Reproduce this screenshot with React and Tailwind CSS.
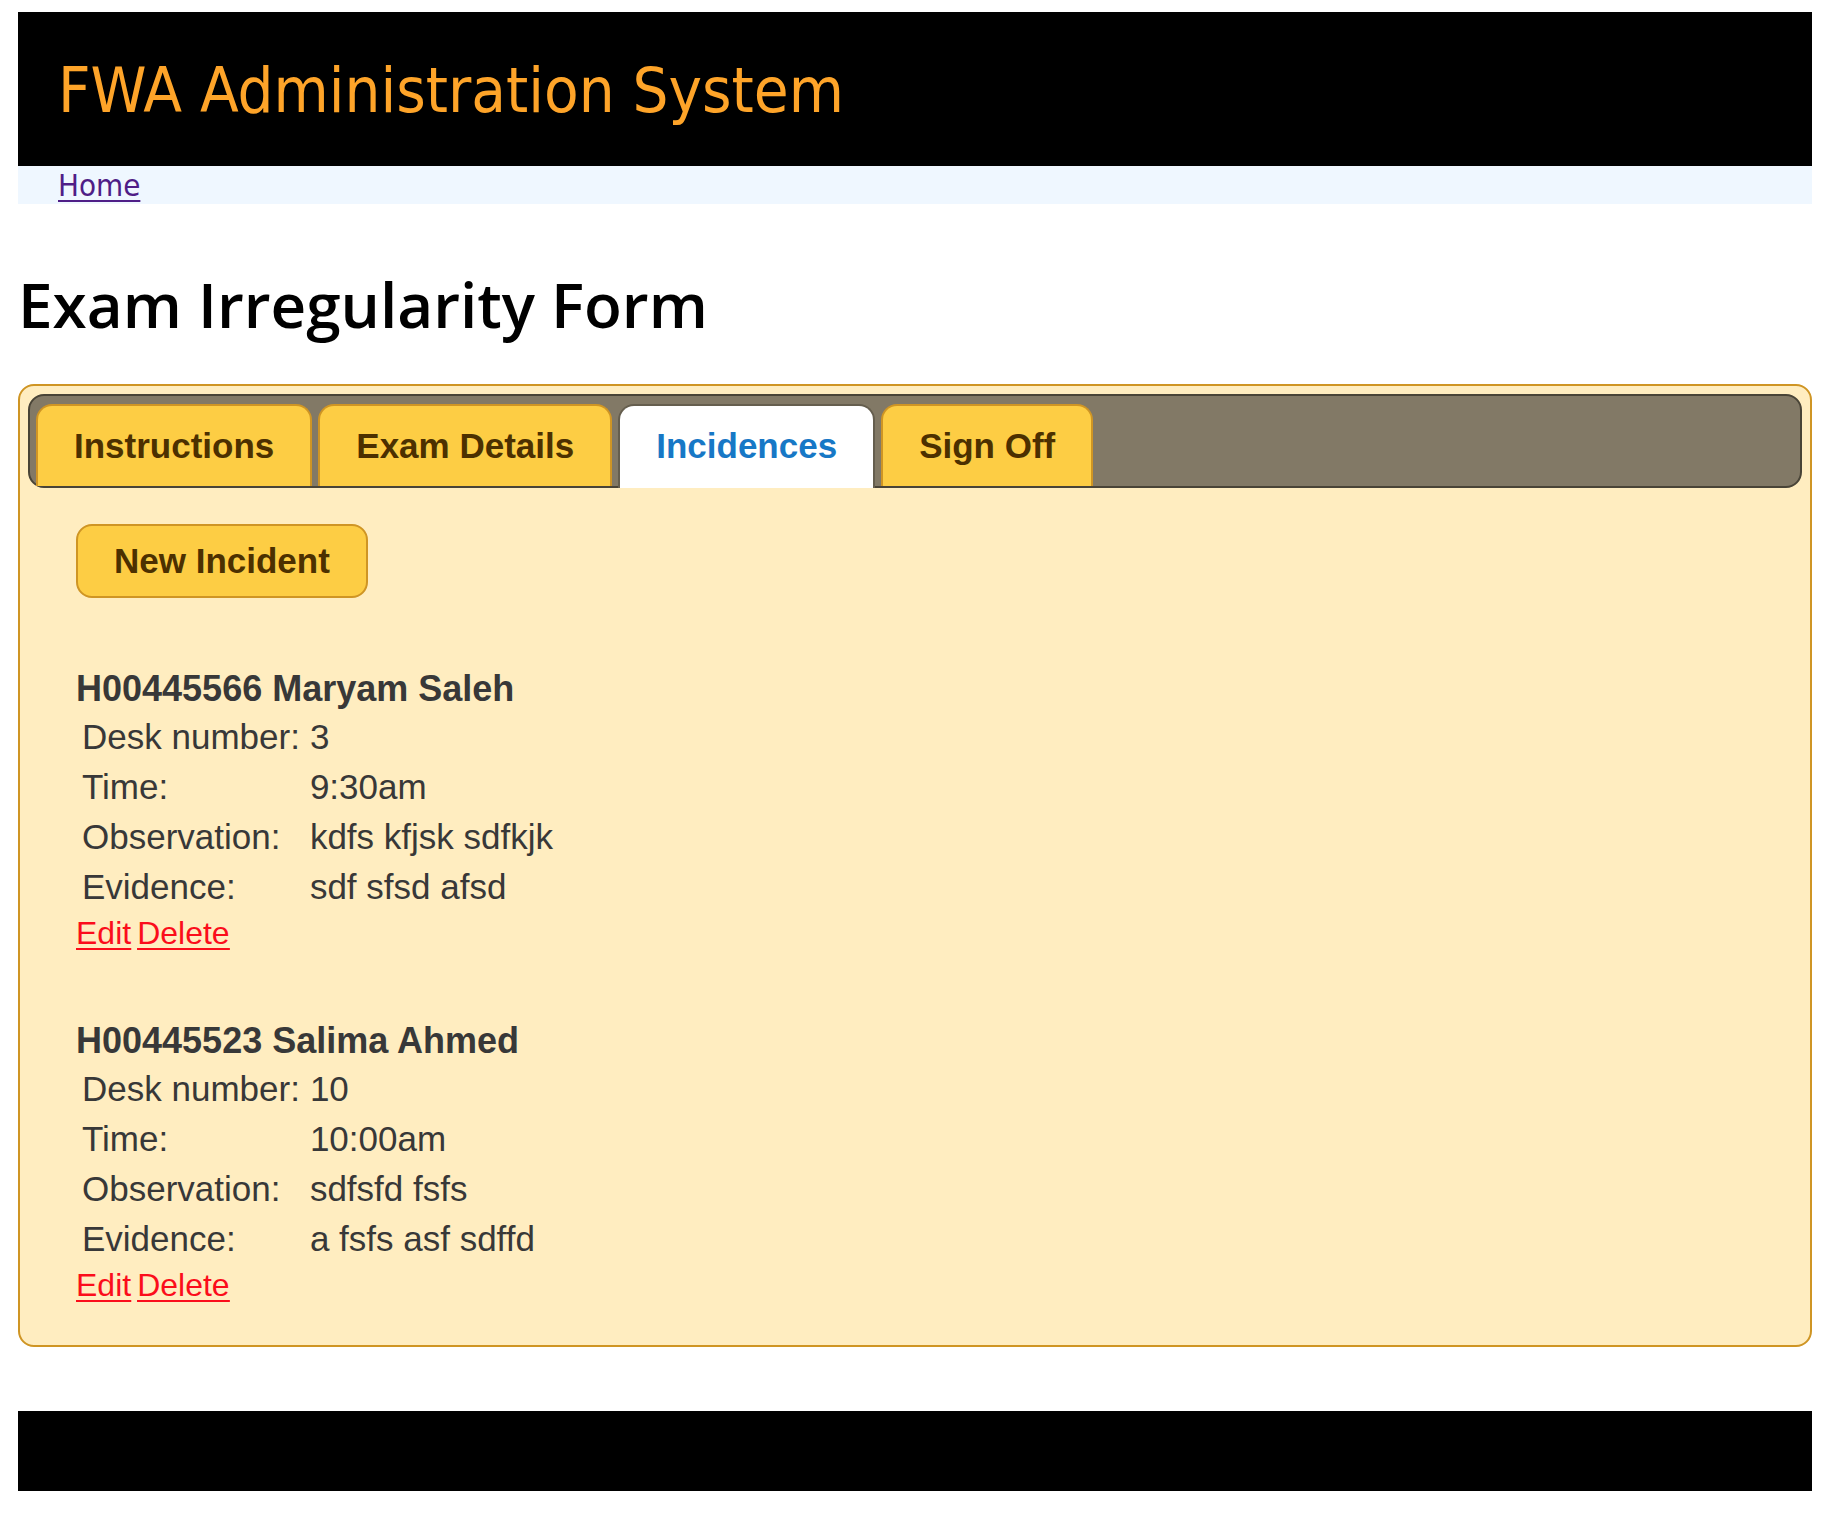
const tabs = ['Instructions', 'Exam Details', 'Incidences', 'Sign Off'];

const incidents = [
  {
    title: 'H00445566 Maryam Saleh',
    rows: [
      ['Desk number:', '3'],
      ['Time:', '9:30am'],
      ['Observation:', 'kdfs kfjsk sdfkjk'],
      ['Evidence:', 'sdf sfsd afsd'],
    ],
  },
  {
    title: 'H00445523 Salima Ahmed',
    rows: [
      ['Desk number:', '10'],
      ['Time:', '10:00am'],
      ['Observation:', 'sdfsfd fsfs'],
      ['Evidence:', 'a fsfs asf sdffd'],
    ],
  },
];

function Tab({ label, active }) {
  const look = active
    ? '-mb-0.5 border-[#655e4e] bg-white pb-0.5 text-[#1778c6]'
    : 'border-[#cf9524] bg-[#fdcd44] text-[#4c3000]';
  return (
    <button
      type="button"
      role="tab"
      aria-selected={active}
      className={`rounded-t-2xl border-2 border-b-0 px-9 text-[35px] leading-[80px] font-bold ${look}`}
    >
      {label}
    </button>
  );
}

function Incident({ title, rows }) {
  return (
    <section className="mt-16">
      <h2 className="text-[36px] leading-[46px] font-bold">{title}</h2>
      <table className="text-[35px] leading-[50px]">
        <tbody>
          {rows.map(([name, value]) => (
            <tr key={name}>
              <th scope="row" className="py-0 pr-2.5 pl-1.5 text-left font-normal">
                {name}
              </th>
              <td className="p-0">{value}</td>
            </tr>
          ))}
        </tbody>
      </table>
      <div className="flex gap-1.5 text-[32px] leading-[42px] text-[#fb0d1b] underline decoration-2 underline-offset-4">
        <a href="#edit">Edit</a>
        <a href="#delete">Delete</a>
      </div>
    </section>
  );
}

export default function App() {
  return (
    <div className='bg-white pt-3 pr-4 pl-[18px] font-["Liberation_Sans",sans-serif] text-[#383838]'>
      <header className='bg-black px-10 pt-[42px] pb-[38px] font-["DejaVu_Sans_Condensed",sans-serif] text-[63px] leading-[74px] text-[#fea429]'>
        FWA Administration System
      </header>
      <nav className='bg-[#eff7ff] px-10 font-["DejaVu_Sans_Condensed",sans-serif] text-[31px] leading-[38px]'>
        <a href="#home" className="text-[#4f1e87] underline decoration-2 underline-offset-4">
          Home
        </a>
      </nav>

      <h1 className='mt-[62px] mb-[42px] font-["Open_Sans",sans-serif] text-[62px] leading-[76px] font-semibold text-black'>
        Exam Irregularity Form
      </h1>

      <main className="rounded-2xl border-2 border-[#cf9524] bg-[#ffedc0] p-2">
        <div
          role="tablist"
          className="flex gap-1.5 rounded-2xl border-2 border-[#494437] bg-[#827966] px-1.5 pt-2"
        >
          {tabs.map((label) => (
            <Tab key={label} label={label} active={label === 'Incidences'} />
          ))}
        </div>

        <div className="px-12 pt-9 pb-[31px]">
          <button
            type="button"
            className="mb-1 rounded-2xl border-2 border-[#cf9524] bg-[#fdcd44] px-9 text-[35px] leading-[70px] font-bold text-[#4c3000]"
          >
            New Incident
          </button>
          {incidents.map((incident) => (
            <Incident key={incident.title} {...incident} />
          ))}
        </div>
      </main>

      <footer className="mt-16 h-20 bg-black" />
    </div>
  );
}
